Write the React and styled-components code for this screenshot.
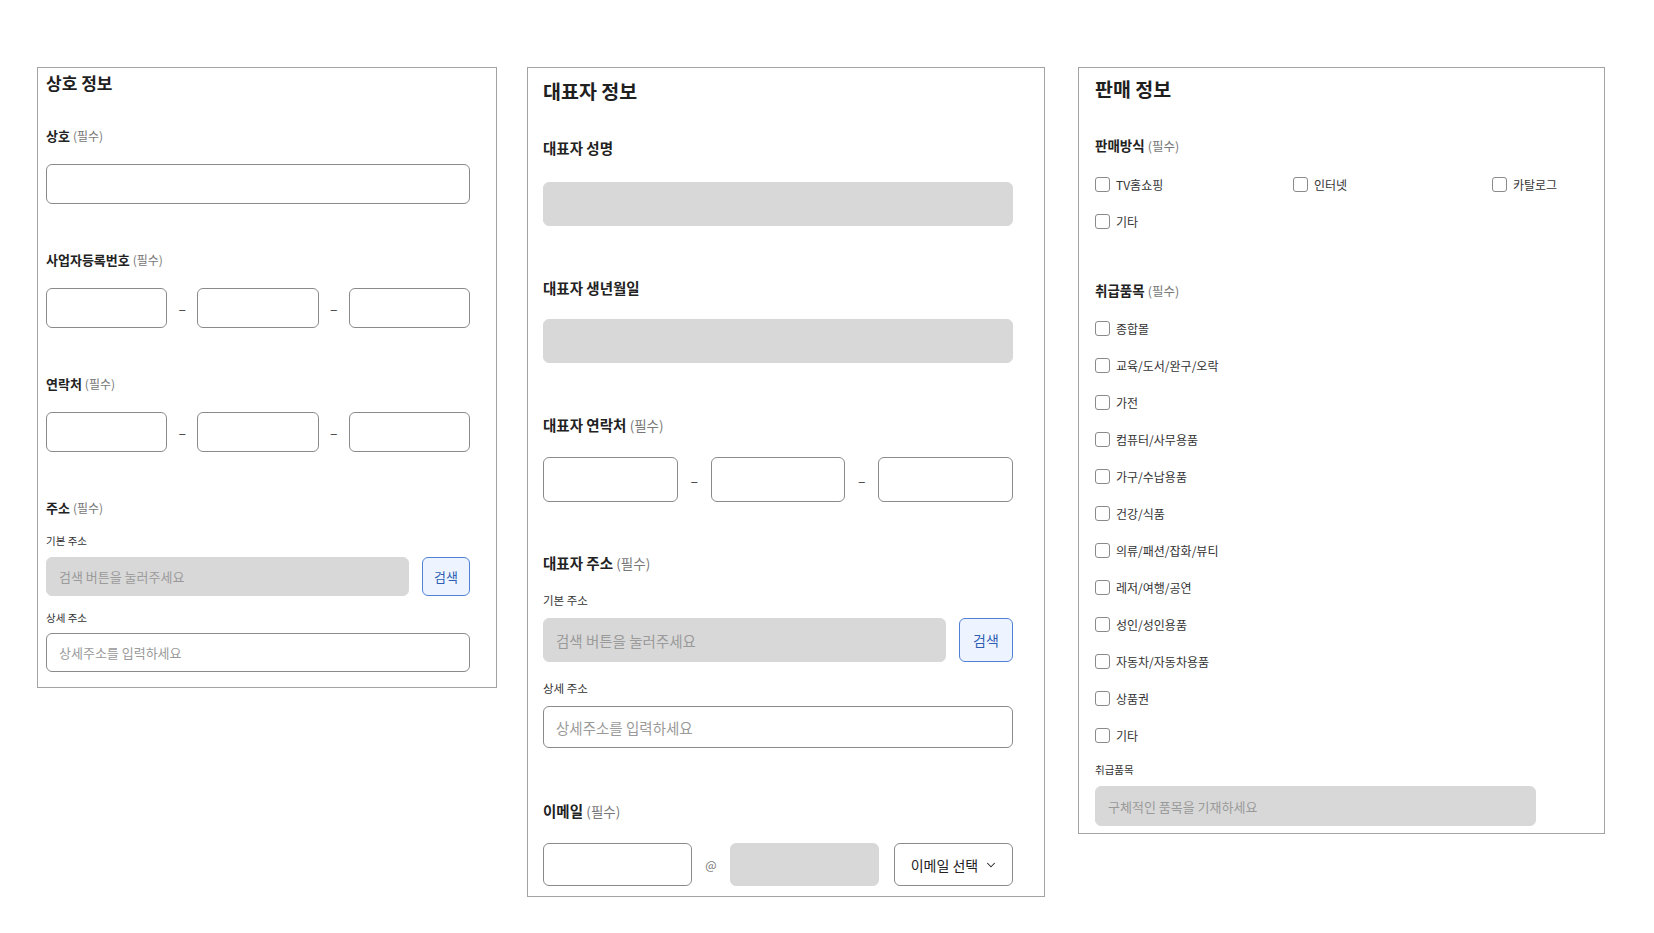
import { createGlobalStyle, styled } from "styled-components";
import { ChevronDown } from "lucide-react";

const GlobalStyle = createGlobalStyle`
  html, body {
    margin: 0;
    padding: 0;
    background: #ffffff;
  }
  body {
    font-family: "Noto Sans CJK KR", "Noto Sans", sans-serif;
    color: #222;
  }
  * { box-sizing: border-box; }
`;

const Page = styled.div`
  display: flex;
  align-items: flex-start;
  gap: 30px;
  padding: 67px 0 0 37px;
  width: 1654px;
  height: 933px;
`;

const Panel = styled.section`
  display: flex;
  flex-direction: column;
  align-items: flex-start;
  width: ${(p) => p.$w}px;
  margin-left: ${(p) => p.$ml || 0}px;
  border: 1px solid #a3a3a3;
  padding: ${(p) => p.$pad};
`;

const Title = styled.h2`
  margin: 0;
  font-size: ${(p) => p.$size}px;
  line-height: ${(p) => p.$lh}px;
  font-weight: 700;
  color: #1f1f1f;
`;

const Label = styled.div`
  margin-top: ${(p) => p.$mt}px;
  margin-bottom: ${(p) => p.$mb}px;
  font-size: ${(p) => p.$size}px;
  line-height: ${(p) => p.$lh}px;
  font-weight: 700;
  color: #222;

  span {
    font-weight: 400;
    color: #777;
    font-size: ${(p) => p.$size - 1}px;
  }
`;

const SubLabel = styled.div`
  margin-top: ${(p) => p.$mt}px;
  margin-bottom: ${(p) => p.$mb}px;
  font-size: ${(p) => p.$size}px;
  line-height: 14px;
  color: #333;
`;

const Input = styled.input`
  display: block;
  flex: ${(p) => (p.$grow ? "1 1 0" : "none")};
  width: ${(p) => (p.$w ? `${p.$w}px` : "100%")};
  min-width: 0;
  height: ${(p) => p.$h}px;
  margin: 0;
  border: 1px solid ${(p) => (p.$gray ? "#d8d8d8" : "#8a8a8a")};
  background: ${(p) => (p.$gray ? "#d8d8d8" : "#ffffff")};
  border-radius: 6px;
  padding: 0 12px;
  font-family: inherit;
  font-size: ${(p) => p.$fs || 13}px;
  color: #222;
  outline: none;

  &::placeholder {
    color: #9a9a9a;
  }
`;

const Row = styled.div`
  display: flex;
  align-items: center;
  width: 100%;
  gap: ${(p) => p.$gap || 0}px;
`;

const Dash = styled.span`
  flex: none;
  width: ${(p) => p.$w}px;
  text-align: center;
  font-size: 14px;
  color: #444;
`;

const SearchButton = styled.button`
  flex: none;
  width: ${(p) => p.$w}px;
  height: ${(p) => p.$h}px;
  border: 1px solid #4f82d6;
  border-radius: 6px;
  background: #eef4ff;
  color: #2e5fb4;
  font-family: inherit;
  font-size: ${(p) => p.$fs}px;
  cursor: pointer;
  padding: 0;
`;

const SelectBox = styled.button`
  flex: none;
  width: 119px;
  height: 43px;
  display: flex;
  align-items: center;
  justify-content: center;
  gap: 6px;
  border: 1px solid #8a8a8a;
  border-radius: 6px;
  background: #ffffff;
  font-family: inherit;
  font-size: 14px;
  color: #222;
  padding: 0 0 0 2px;
`;

const At = styled.span`
  flex: none;
  width: 38px;
  text-align: center;
  font-size: 12px;
  color: #777;
`;

const CheckGrid = styled.div`
  display: grid;
  width: 100%;
  grid-template-columns: ${(p) => p.$cols};
  row-gap: 17px;
  margin-top: ${(p) => p.$mt}px;
`;

const CheckItem = styled.label`
  display: flex;
  align-items: center;
  gap: 6px;
  height: 20px;
  font-size: 12px;
  color: #333;
  white-space: nowrap;
`;

const Box = styled.span`
  flex: none;
  width: 15px;
  height: 15px;
  border: 1px solid #8a8a8a;
  border-radius: 3px;
  background: #fff;
`;

const Check = ({ children }) => (
  <CheckItem>
    <Box />
    {children}
  </CheckItem>
);

const Required = () => <span>(필수)</span>;

const methods = ["TV홈쇼핑", "인터넷", "카탈로그", "기타"];
const goods = [
  "종합몰",
  "교육/도서/완구/오락",
  "가전",
  "컴퓨터/사무용품",
  "가구/수납용품",
  "건강/식품",
  "의류/패션/잡화/뷰티",
  "레저/여행/공연",
  "성인/성인용품",
  "자동차/자동차용품",
  "상품권",
  "기타",
];

const BusinessPanel = () => (
  <Panel $w={460} $pad="4px 26px 15px 8px">
    <Title $size={17} $lh={22}>상호 정보</Title>

    <Label $mt={34} $mb={20} $size={13} $lh={16}>
      상호 <Required />
    </Label>
    <Input $h={40} />

    <Label $mt={48} $mb={20} $size={13} $lh={16}>
      사업자등록번호 <Required />
    </Label>
    <Row>
      <Input $h={40} $grow />
      <Dash $w={30}>–</Dash>
      <Input $h={40} $grow />
      <Dash $w={30}>–</Dash>
      <Input $h={40} $grow />
    </Row>

    <Label $mt={48} $mb={20} $size={13} $lh={16}>
      연락처 <Required />
    </Label>
    <Row>
      <Input $h={40} $grow />
      <Dash $w={30}>–</Dash>
      <Input $h={40} $grow />
      <Dash $w={30}>–</Dash>
      <Input $h={40} $grow />
    </Row>

    <Label $mt={48} $mb={0} $size={13} $lh={16}>
      주소 <Required />
    </Label>
    <SubLabel $mt={18} $mb={9} $size={10.5}>기본 주소</SubLabel>
    <Row $gap={13}>
      <Input $h={39} $grow $gray placeholder="검색 버튼을 눌러주세요" />
      <SearchButton $w={48} $h={39} $fs={13}>검색</SearchButton>
    </Row>
    <SubLabel $mt={15} $mb={8} $size={10.5}>상세 주소</SubLabel>
    <Input $h={39} placeholder="상세주소를 입력하세요" />
  </Panel>
);

const OwnerPanel = () => (
  <Panel $w={518} $pad="11px 31px 10px 15px">
    <Title $size={19.5} $lh={24}>대표자 정보</Title>

    <Label $mt={36} $mb={25} $size={14.5} $lh={18}>대표자 성명</Label>
    <Input $h={44} $gray />

    <Label $mt={53} $mb={22} $size={14.5} $lh={18}>대표자 생년월일</Label>
    <Input $h={44} $gray />

    <Label $mt={53} $mb={23} $size={14.5} $lh={18}>
      대표자 연락처 <Required />
    </Label>
    <Row>
      <Input $h={45} $grow />
      <Dash $w={33}>–</Dash>
      <Input $h={45} $grow />
      <Dash $w={33}>–</Dash>
      <Input $h={45} $grow />
    </Row>

    <Label $mt={52} $mb={0} $size={14.5} $lh={18}>
      대표자 주소 <Required />
    </Label>
    <SubLabel $mt={21} $mb={11} $size={11.5}>기본 주소</SubLabel>
    <Row $gap={13}>
      <Input $h={44} $grow $gray $fs={14.5} placeholder="검색 버튼을 눌러주세요" />
      <SearchButton $w={54} $h={44} $fs={14}>검색</SearchButton>
    </Row>
    <SubLabel $mt={19} $mb={11} $size={11.5}>상세 주소</SubLabel>
    <Input $h={42} $fs={14.5} placeholder="상세주소를 입력하세요" />

    <Label $mt={54} $mb={23} $size={14.5} $lh={18}>
      이메일 <Required />
    </Label>
    <Row>
      <Input $h={43} $w={149} />
      <At>@</At>
      <Input $h={43} $w={149} $gray />
      <Dash $w={15} />
      <SelectBox>
        이메일 선택
        <ChevronDown size={14} strokeWidth={1.8} />
      </SelectBox>
    </Row>
  </Panel>
);

const SalesPanel = () => (
  <Panel $w={527} $ml={3} $pad="9px 16px 7px 16px">
    <Title $size={19.5} $lh={24}>판매 정보</Title>

    <Label $mt={36} $mb={0} $size={13.5} $lh={16}>
      판매방식 <Required />
    </Label>
    <CheckGrid $cols="198px 199px auto" $mt={20}>
      {methods.map((m) => (
        <Check key={m}>{m}</Check>
      ))}
    </CheckGrid>

    <Label $mt={51} $mb={0} $size={13.5} $lh={16}>
      취급품목 <Required />
    </Label>
    <CheckGrid $cols="1fr" $mt={19}>
      {goods.map((g) => (
        <Check key={g}>{g}</Check>
      ))}
    </CheckGrid>

    <SubLabel $mt={18} $mb={9} $size={10.5}>취급품목</SubLabel>
    <Input $h={40} $w={441} $gray placeholder="구체적인 품목을 기재하세요" />
  </Panel>
);

const App = () => (
  <>
    <GlobalStyle />
    <Page>
      <BusinessPanel />
      <OwnerPanel />
      <SalesPanel />
    </Page>
  </>
);

export default App;
